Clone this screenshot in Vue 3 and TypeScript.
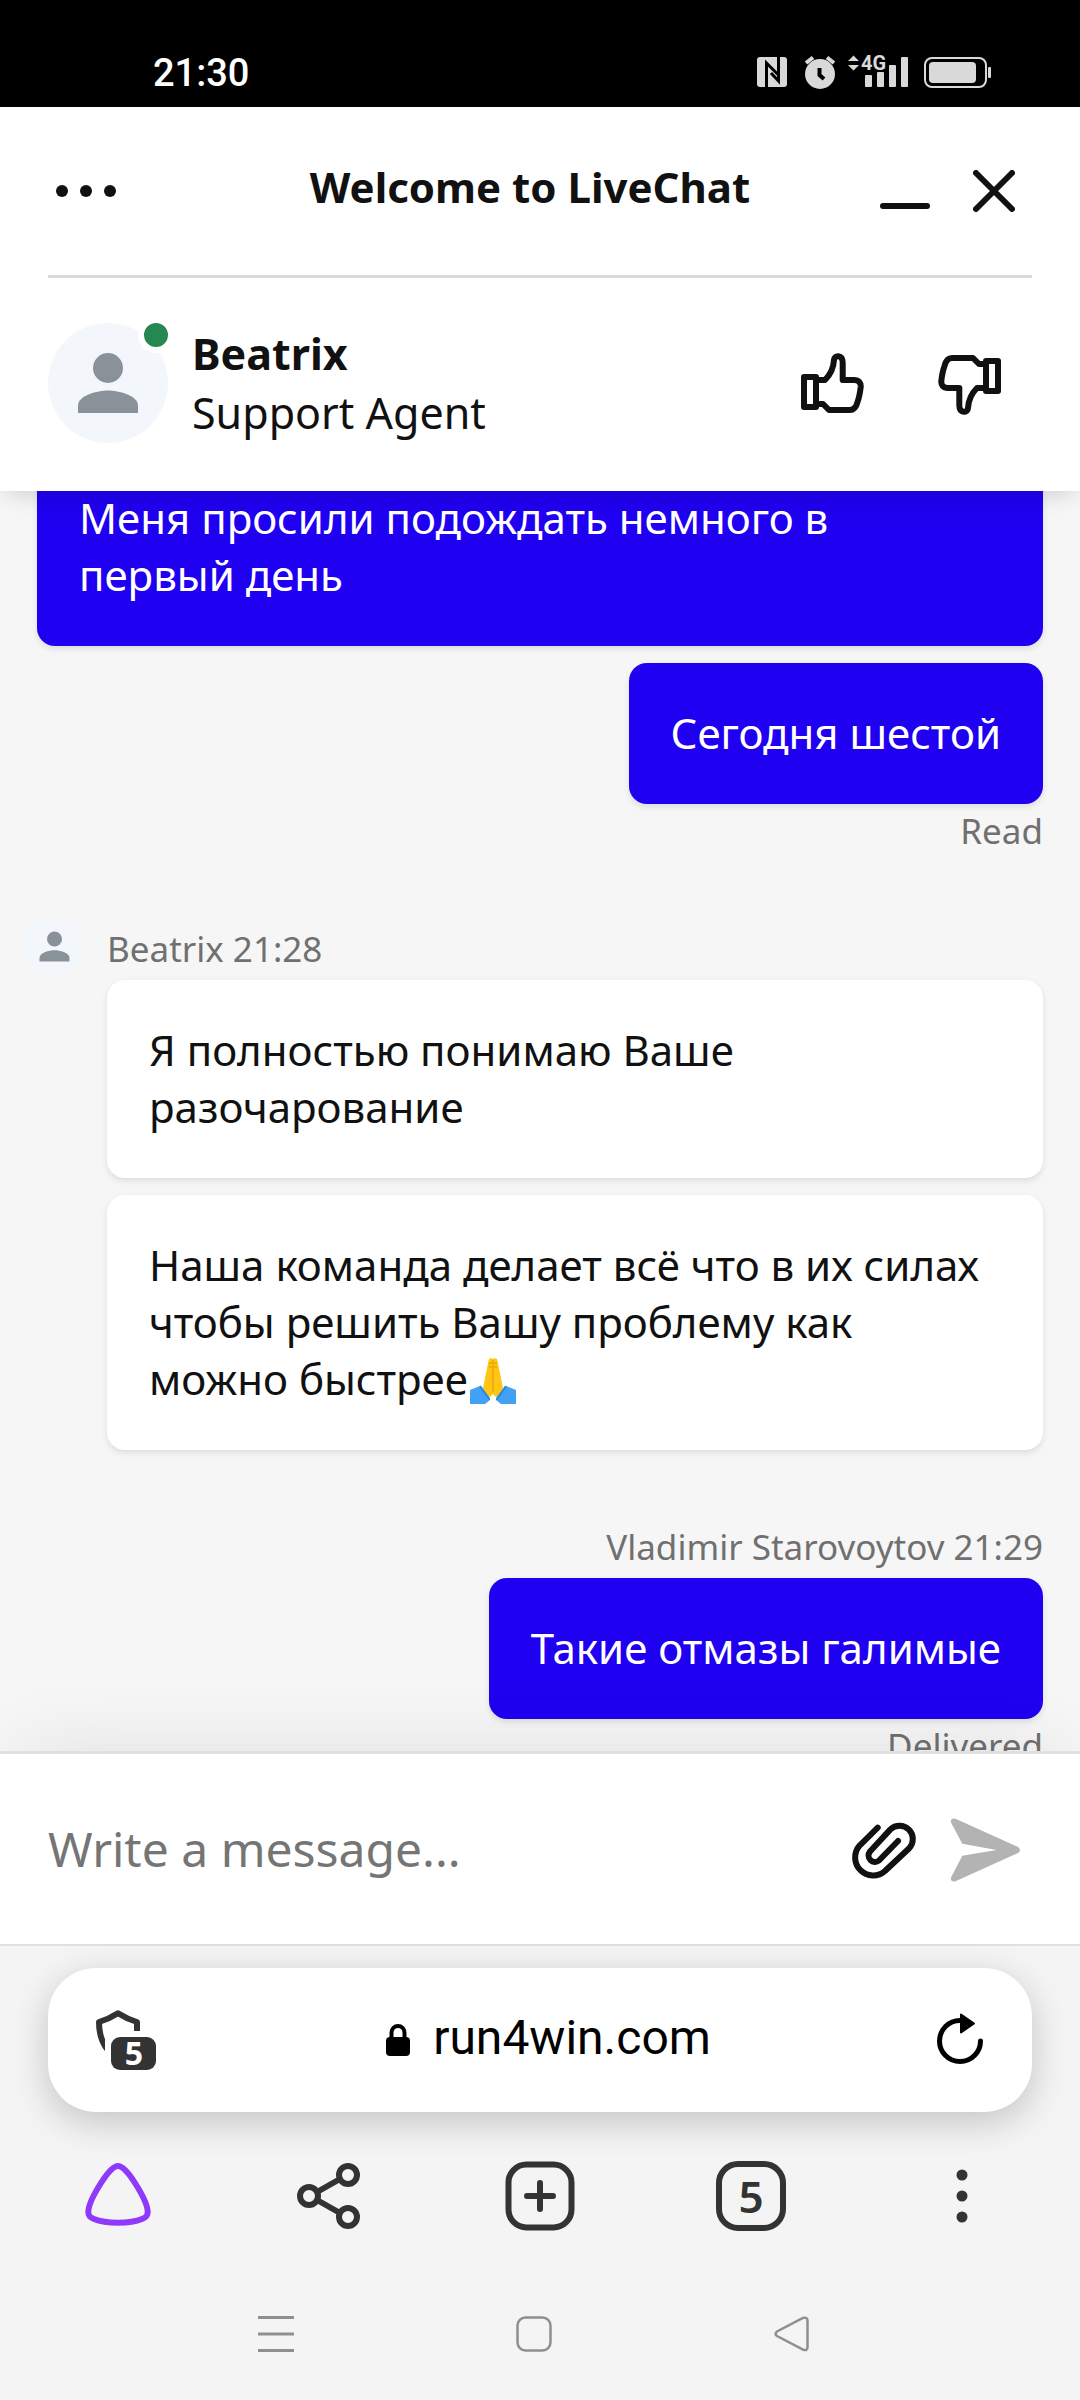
<script setup lang="ts">
import { ref } from 'vue'

interface Bubble {
  text: string
  emoji?: boolean
}

interface Group {
  id: number
  own: boolean
  meta?: string
  status?: string
  bubbles: Bubble[]
}

const draft = ref('')

const groups: Group[] = [
  {
    id: 1,
    own: true,
    status: 'Read',
    bubbles: [
      { text: 'Меня просили подождать немного в\nпервый день' },
      { text: 'Сегодня шестой' },
    ],
  },
  {
    id: 2,
    own: false,
    meta: 'Beatrix 21:28',
    bubbles: [
      { text: 'Я полностью понимаю Ваше\nразочарование' },
      { text: 'Наша команда делает всё что в их силах чтобы решить Вашу проблему как можно быстрее', emoji: true },
    ],
  },
  {
    id: 3,
    own: true,
    meta: 'Vladimir Starovoytov 21:29',
    status: 'Delivered',
    bubbles: [{ text: 'Такие отмазы галимые' }],
  },
]

const thumb =
  'M19 28H25C31 22 33.5 16 34 8C34 3 42.7 2 42.7 11V28H54C59 28 61 31 60.7 35C60 41 59 46 57.5 50C56 56 53 58 50 58H29L23 52H19'
</script>

<template>
  <div class="screen">
    <div class="status-bar">
      <span class="clock">21:30</span>
      <svg width="236" height="52" viewBox="756 46 236 52" fill="#d9d9d9" aria-hidden="true">
        <rect x="757" y="57" width="30" height="30" rx="3" />
        <path d="M766.500 88V63L778 74.500M778.500 56V81L771 73" fill="none" stroke="#000" stroke-width="3" />
        <circle cx="820" cy="74" r="15" />
        <path d="M806 63L813 57.500M834 63L827 57.500" stroke="#d9d9d9" stroke-width="4" />
        <path d="M819.500 68V75L824 79" fill="none" stroke="#000" stroke-width="4" />
        <path d="M848 61L853.500 55.500L859 61ZM848 65H859L853.500 70.500Z" />
        <text x="861" y="70" font-size="20" font-weight="700" font-family="Roboto, sans-serif">4G</text>
        <rect x="865" y="75" width="7" height="12" rx="1" />
        <rect x="877" y="72" width="7" height="15" rx="1" />
        <rect x="889" y="65" width="7" height="22" rx="1" />
        <rect x="901" y="57" width="7" height="30" rx="1" />
        <rect x="925" y="58" width="61" height="29" rx="7" fill="none" stroke="#d9d9d9" stroke-width="2" />
        <rect x="929" y="62" width="47" height="21" rx="4" />
        <rect x="988" y="67" width="3" height="11" rx="1" />
      </svg>
    </div>

    <header class="header">
      <div class="title-row">
        <button class="icon-btn menu" aria-label="Menu">
          <svg width="76" height="12" viewBox="0 0 76 12" fill="#111">
            <circle cx="14" cy="6" r="6" /><circle cx="38" cy="6" r="6" /><circle cx="62" cy="6" r="6" />
          </svg>
        </button>
        <h1 class="title">Welcome to LiveChat</h1>
        <div class="window-actions">
          <button class="icon-btn" aria-label="Minimize">
            <svg width="52" height="42" viewBox="0 0 52 42"><path d="M4 36H48" stroke="#111" stroke-width="6" stroke-linecap="round" /></svg>
          </button>
          <button class="icon-btn" aria-label="Close">
            <svg width="42" height="42" viewBox="0 0 42 42"><path d="M3 3L39 39M39 3L3 39" stroke="#111" stroke-width="6" stroke-linecap="round" /></svg>
          </button>
        </div>
      </div>
      <div class="agent-row">
        <div class="avatar">
          <svg width="90" height="90" viewBox="0 0 24 24" fill="#8a9299" aria-hidden="true">
            <circle cx="12" cy="8" r="4" /><path d="M12 14C9.300 14 4 15.300 4 18V20H20V18C20 15.300 14.700 14 12 14Z" />
          </svg>
          <span class="online"></span>
        </div>
        <div class="agent-text">
          <div class="agent-name">Beatrix</div>
          <div>Support Agent</div>
        </div>
        <div class="rate">
          <button class="icon-btn" aria-label="Rate good">
            <svg width="64" height="66" viewBox="0 -2 64 66" fill="none" stroke="#111" stroke-width="6" stroke-linejoin="round">
              <rect x="4" y="25" width="12" height="30" /><path :d="thumb" />
            </svg>
          </button>
          <button class="icon-btn" aria-label="Rate bad">
            <svg width="64" height="66" viewBox="0 -2 64 66" fill="none" stroke="#111" stroke-width="6" stroke-linejoin="round">
              <g transform="rotate(180 32 32)"><rect x="4" y="25" width="12" height="30" /><path :d="thumb" /></g>
            </svg>
          </button>
        </div>
      </div>
    </header>

    <main class="chat">
      <div class="thread">
        <section v-for="group in groups" :key="group.id" class="group" :class="{ own: group.own }">
          <div v-if="!group.own" class="avatar small">
            <svg width="45" height="45" viewBox="0 0 24 24" fill="#8a9299" aria-hidden="true">
              <circle cx="12" cy="8" r="4" /><path d="M12 14C9.300 14 4 15.300 4 18V20H20V18C20 15.300 14.700 14 12 14Z" />
            </svg>
          </div>
          <div class="group-body">
            <div v-if="group.meta" class="meta">{{ group.meta }}</div>
            <div class="bubbles">
              <p v-for="(bubble, i) in group.bubbles" :key="i" class="bubble">{{ bubble.text
                }}<svg v-if="bubble.emoji" class="emoji" width="50" height="48" viewBox="0 0 50 48" role="img" aria-label="Folded hands">
                  <path d="M20.500 4C20.500 .8 24.500 .8 25 2.500C25.500 .8 29.500 .8 29.500 4L35 31L32 40H18L15 31Z" fill="#ffc414" />
                  <path d="M25 3V35M21 6H24M26 6H29M21 10H24M26 10H29" stroke="#e59600" stroke-width="1" fill="none" />
                  <path d="M2 33L12 29L22 43L17 47H2Z" fill="#42a0f5" />
                  <path d="M48 33L38 29L28 43L33 47H48Z" fill="#42a0f5" />
                  <path d="M12 29L22 43M38 29L28 43" stroke="#1e88e5" stroke-width="2" />
                  <path d="M25 37L28 40V43L31 47H19L22 43V40Z" fill="#fff" />
                </svg></p>
            </div>
            <div v-if="group.status" class="meta delivery">{{ group.status }}</div>
          </div>
        </section>
      </div>
    </main>

    <form class="composer" @submit.prevent>
      <input v-model="draft" class="message-input" type="text" placeholder="Write a message..." aria-label="Write a message" />
      <button type="button" class="icon-btn" aria-label="Attach file">
        <svg width="68" height="68" viewBox="0 -5 68 68" fill="none" stroke="#111" stroke-width="6" stroke-linecap="round" stroke-linejoin="round">
          <path d="M27.700 7.700L9.600 25.600A18 18 0 0 0 35 51L59.200 28.200A13.300 13.300 0 0 0 40.400 9.400L20 31.500A6.400 6.400 0 0 0 29 40.500L48 21" />
        </svg>
      </button>
      <button type="submit" class="icon-btn" aria-label="Send">
        <svg width="76" height="70" viewBox="0 -2 76 70" fill="#b3b3b3">
          <path d="M7 2.500L70 31Q74 34 70 37L7 65.500Q2 66 3 61.500L14.300 39.700L48.700 34L14.300 27.700L3 6.500Q2 2 7 2.500Z" />
        </svg>
      </button>
    </form>

    <footer class="browser">
      <div class="address">
        <button class="icon-btn" aria-label="Protection">
          <svg width="64" height="76" viewBox="0 -6 64 76">
            <path d="M43 23V14Q33 11 24 5.300Q15 11 5 14C5 25 7 33 13 41" fill="none" stroke="#333" stroke-width="6" stroke-linejoin="round" />
            <rect x="11" y="23" width="53" height="45" rx="10" fill="#fff" />
            <rect x="17" y="29" width="45" height="33" rx="9" fill="#333" />
            <text x="40" y="57" text-anchor="middle" font-size="32" font-weight="700" font-family="'Noto Sans', sans-serif" fill="#fff">5</text>
          </svg>
        </button>
        <a class="url" href="#">
          <svg width="24" height="32" viewBox="0 0 24 32" aria-hidden="true">
            <rect y="13" width="24" height="19" rx="4" /><path d="M5.500 15V8.500A6.500 6.500 0 0 1 18.500 8.500V15" fill="none" stroke="#000" stroke-width="4" />
          </svg>
          <span class="domain">run4win.com</span>
        </a>
        <button class="icon-btn" aria-label="Reload">
          <svg width="56" height="64" viewBox="0 0 56 64">
            <path d="M48.500 33A20.500 20.500 0 1 1 28 12.500" fill="none" stroke="#000" stroke-width="5" stroke-linecap="round" />
            <path d="M29 6.500L42 15.500L29 24.500Z" stroke="#000" stroke-width="2" stroke-linejoin="round" />
          </svg>
        </button>
      </div>

      <nav class="tools" aria-label="Browser">
        <button class="icon-btn" aria-label="Alice">
          <svg width="66" height="66" viewBox="0 0 66 66" fill="none" stroke="#8f39fc" stroke-width="6">
            <path d="M33 3C37 3 43 9 50 20C57 31 62.700 42 62.700 49C62.700 53 61 54.500 57 56C51 58.500 42 59.700 33 59.700C24 59.700 15 58.500 9 56C5 54.500 3.300 53 3.300 49C3.300 42 9 31 16 20C23 9 29 3 33 3Z" />
          </svg>
        </button>
        <button class="icon-btn" aria-label="Share">
          <svg width="63" height="66" viewBox="0 0 63 66" fill="none" stroke="#333" stroke-width="6">
            <path d="M20 29L43 16M20 37L43 50" /><circle cx="51" cy="12" r="9" /><circle cx="12" cy="33" r="9" /><circle cx="51" cy="54" r="9" />
          </svg>
        </button>
        <button class="icon-btn" aria-label="New tab">
          <svg width="70" height="70" viewBox="0 0 70 70" fill="none" stroke="#333" stroke-width="6" stroke-linecap="round">
            <rect x="3.500" y="3.500" width="63" height="63" rx="18" /><path d="M35 22V48M22 35H48" />
          </svg>
        </button>
        <button class="icon-btn tabs" aria-label="Tabs">5</button>
        <button class="icon-btn" aria-label="More">
          <svg width="12" height="54" viewBox="0 0 12 54" fill="#333">
            <circle cx="6" cy="6" r="5.500" /><circle cx="6" cy="27" r="5.500" /><circle cx="6" cy="48" r="5.500" />
          </svg>
        </button>
      </nav>

      <nav class="system" aria-label="System">
        <button class="icon-btn" aria-label="Recents">
          <svg width="36" height="36" viewBox="0 0 36 36" stroke="#8f8f8f" stroke-width="3"><path d="M0 1.500H36M0 18H36M0 34.500H36" /></svg>
        </button>
        <button class="icon-btn" aria-label="Home">
          <svg width="36" height="36" viewBox="0 0 36 36" fill="none" stroke="#8f8f8f" stroke-width="2.500"><rect x="1.500" y="1.500" width="33" height="33" rx="8" /></svg>
        </button>
        <button class="icon-btn" aria-label="Back">
          <svg width="36" height="36" viewBox="0 0 36 36" fill="none" stroke="#8f8f8f" stroke-width="2.500">
            <path d="M29 2Q33.500 .5 33.500 5V31Q33.500 35.500 29 33.500L3 20Q.2 18 3 15.500Z" />
          </svg>
        </button>
      </nav>
    </footer>
  </div>
</template>

<style>
body {
  margin: 0;
  background: #f4f4f4;
}
</style>

<style scoped>
.screen {
  display: flex;
  flex-direction: column;
  height: 100vh;
  font-family: 'Noto Sans', sans-serif;
  font-size: 42px;
  line-height: 57px;
  color: #111;
  background: #f4f4f4;
}

.icon-btn {
  display: flex;
  align-items: center;
  justify-content: center;
  padding: 0;
  border: 0;
  background: none;
  cursor: pointer;
}

svg {
  display: block;
  flex: none;
}

.status-bar {
  display: flex;
  flex: none;
  align-items: center;
  justify-content: space-between;
  box-sizing: border-box;
  height: 107px;
  padding: 37px 88px 0 153px;
  background: #000;
}

.clock {
  padding-top: 2px;
  font-family: Roboto, sans-serif;
  font-size: 38px;
  font-weight: 500;
  color: #fff;
}

.header {
  position: relative;
  z-index: 2;
  flex: none;
  padding: 0 48px;
  background: #fff;
  box-shadow: 0 6px 24px -6px rgba(0, 0, 0, 0.2);
}

.title-row {
  display: grid;
  grid-template-columns: 144px 1fr 164px;
  align-items: center;
  height: 168px;
  border-bottom: 3px solid #d9d9d9;
}

.menu {
  width: 76px;
}

.title {
  margin: 0;
  padding-bottom: 9px;
  font-size: 42px;
  font-weight: 700;
  text-align: center;
  white-space: nowrap;
}

.window-actions {
  display: flex;
  justify-content: flex-end;
  gap: 42px;
  padding-right: 17px;
}

.agent-row {
  display: flex;
  align-items: center;
  padding: 45px 0 48px;
}

.avatar {
  position: relative;
  display: flex;
  flex: none;
  align-items: center;
  justify-content: center;
  width: 120px;
  height: 120px;
  border-radius: 50%;
  background: #f3f7fb;
}

.online {
  position: absolute;
  top: -6px;
  right: -6px;
  width: 24px;
  height: 24px;
  border: 6px solid #fff;
  border-radius: 50%;
  background: #268750;
}

.agent-text {
  flex: 1;
  margin-left: 24px;
  font-size: 43px;
  line-height: 59px;
}

.agent-name {
  font-weight: 700;
}

.rate {
  display: flex;
  gap: 74px;
  padding-right: 30px;
}

.chat {
  flex: 1;
  min-height: 0;
  overflow: hidden;
  background: #f6f6f6;
}

.thread {
  display: flex;
  flex-direction: column;
  gap: 73px;
  margin-top: -43px;
  padding: 0 37px 0 24px;
}

.group {
  display: flex;
  align-items: flex-start;
}

.group.own {
  margin-left: 13px;
}

.avatar.small {
  width: 60px;
  height: 60px;
  margin: -9px 23px 0 0;
}

.group-body {
  flex: 1;
  min-width: 0;
}

.bubbles {
  display: flex;
  flex-direction: column;
  gap: 17px;
}

.bubble {
  margin: 0;
  padding: 41px 42px 43px;
  border-radius: 18px;
  white-space: pre-line;
  background: #fff;
  box-shadow: 0 3px 6px rgba(0, 0, 0, 0.1);
}

.own .bubbles {
  align-items: flex-end;
}

.own .bubble {
  color: #fff;
  background: #2000f0;
}

.own .bubble:first-child:not(:last-child) {
  align-self: stretch;
}

.emoji {
  display: inline-block;
  vertical-align: -10px;
}

.meta {
  margin-bottom: 7px;
  font-size: 35px;
  line-height: 48px;
  color: #707070;
}

.own .meta {
  text-align: right;
}

.own .delivery {
  margin: 6px 0 0;
  line-height: 42px;
}

.composer {
  position: relative;
  z-index: 1;
  display: flex;
  flex: none;
  align-items: center;
  gap: 30px;
  height: 190px;
  padding: 0 56px 0 48px;
  border-top: 3px solid #e0e0e0;
  border-bottom: 2px solid #e0e0e0;
  background: #fff;
  box-shadow: 0 -20px 80px -20px rgba(0, 0, 0, 0.09);
}

.message-input {
  flex: 1;
  min-width: 0;
  height: 72px;
  padding: 0 0 2px;
  border: 0;
  outline: 0;
  font: inherit;
  font-size: 48px;
  color: #111;
  background: none;
}

.message-input::placeholder {
  color: #757575;
  opacity: 1;
}

.browser {
  position: relative;
  z-index: 2;
  flex: none;
  padding: 22px 0 12px;
  background: #f4f4f4;
}

.address {
  display: flex;
  align-items: center;
  justify-content: space-between;
  height: 144px;
  margin: 0 48px;
  padding: 0 44px 0 46px;
  box-sizing: border-box;
  border-radius: 48px;
  background: #fff;
  box-shadow: 0 10px 36px rgba(0, 0, 0, 0.2);
}

.url {
  display: flex;
  flex: 1;
  align-items: center;
  justify-content: center;
  gap: 23px;
  padding-left: 7px;
  font-family: Roboto, sans-serif;
  font-size: 48px;
  color: #000;
  text-decoration: none;
}

.domain {
  padding-bottom: 5px;
}

.tools {
  display: grid;
  grid-template-columns: repeat(5, 1fr);
  align-items: center;
  justify-items: center;
  height: 168px;
  padding: 0 12px;
}

.tabs {
  box-sizing: border-box;
  width: 70px;
  height: 70px;
  border: 6px solid #333;
  border-radius: 22px;
  font-family: 'Noto Sans', sans-serif;
  font-size: 44px;
  font-weight: 600;
  line-height: 56px;
  color: #333;
}

.system {
  display: flex;
  align-items: center;
  justify-content: center;
  gap: 222px;
  height: 108px;
  padding-right: 12px;
}
</style>
